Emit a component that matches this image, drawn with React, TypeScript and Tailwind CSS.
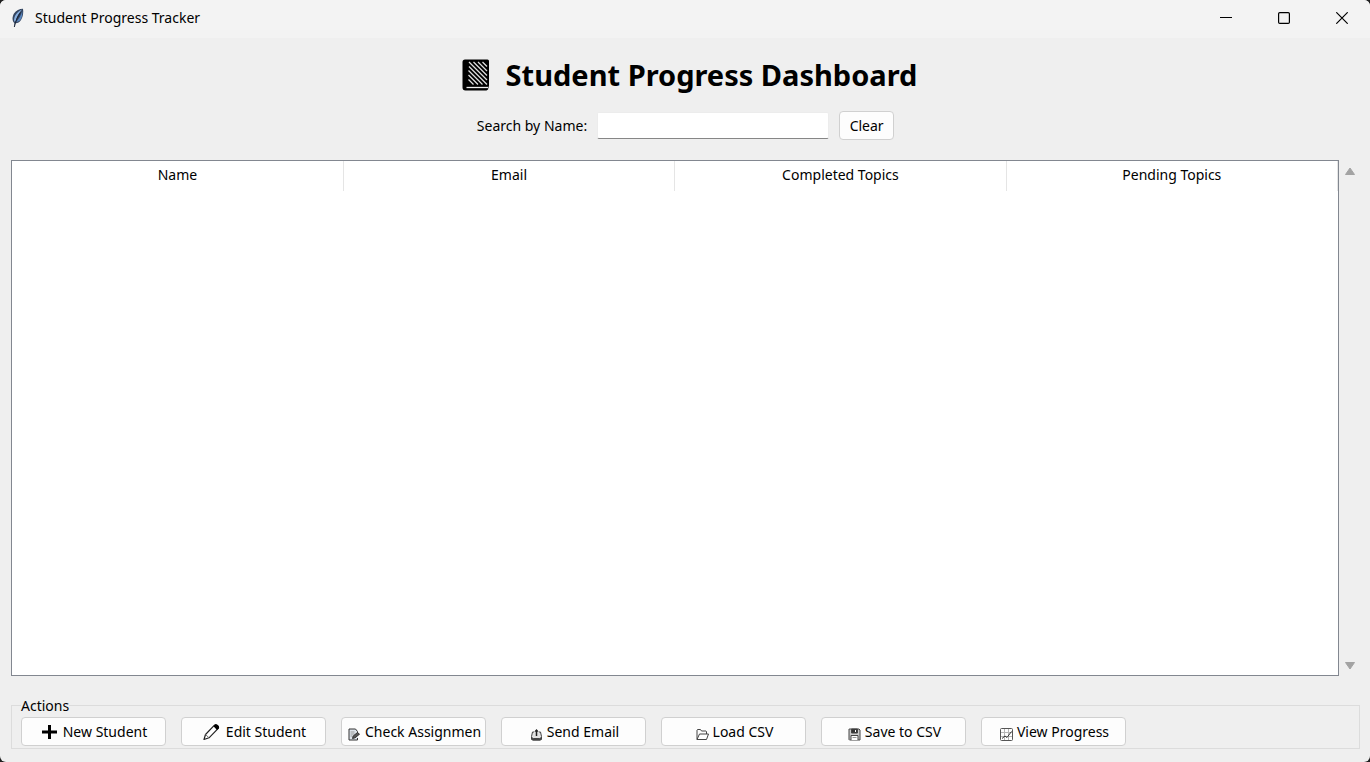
import { useState, type ReactNode } from "react";

function Feather() {
  return (
    <svg width="14" height="20" viewBox="0 0 14 20" aria-hidden="true">
      <path d="M3.500 19 3.400 15C1 13 1 9 3 5.500 5 2.500 8.500 .8 12 .8c.6 3.500 .2 8-2 11.200-1.500 2.200-3.700 3.500-5.700 3.300z" fill="#33445f" />
      <path d="M3.200 13.500C2.500 9 5.500 4 11 1.600 8 5 5.500 9 4.500 13.500z" fill="#86aede" />
      <path d="M5 14C8 11 10 7 11.300 3c.3 3-.3 6.500-1.800 8.800-1 1.400-2.900 2.400-4.500 2.200z" fill="#5a86bf" />
      <path d="M3.300 19C4.500 13 7 8 9.500 4.500" fill="none" stroke="#182234" />
    </svg>
  );
}

function Notebook() {
  return (
    <svg width="28" height="32" viewBox="0 0 28 32" aria-hidden="true">
      <path d="M3 .5h22.500a1.500 1.500 0 0 1 1.500 1.500v24.500l-1 4-1.500 1H3.500A3 3 0 0 1 .5 28.500V3A2.500 2.500 0 0 1 3 .5z" fill="#000" />
      <path d="M4.500 28.500H26" stroke="#efefef" strokeWidth="1.300" />
      <path d="M7 3 25 21M11.500 3 25 16.500M16 3l9 9M20.500 3 25 7.500M7 7.500 25 25.500M6.500 11.500 20.500 25.500M6.500 16l9.500 9.500M6.500 20.500l5 5" stroke="#dedede" strokeWidth="1.300" />
    </svg>
  );
}

function PlusIcon() {
  return (
    <svg width="15" height="16" viewBox="0 0 15 16" aria-hidden="true">
      <path d="M7.500 1v14M0 8h15" stroke="#000" strokeWidth="3" />
    </svg>
  );
}

function PencilIcon() {
  return (
    <svg width="17" height="18" viewBox="0 0 17 18" aria-hidden="true">
      <path d="M1 16.500 2.500 11.500 11.500 2.200C13 .8 16.500 4 15 5.700L6 14.800z" fill="#fff" stroke="#222" strokeWidth="1.200" strokeLinejoin="round" />
      <path d="M10.500 3.200 12 1.500c1.800-1.200 5.200 2 3.800 3.800L14 7z" fill="#000" />
      <path d="M2.500 11.500 6 14.800" stroke="#777" />
    </svg>
  );
}

function MemoIcon() {
  return (
    <svg width="13" height="13" viewBox="0 0 13 13" aria-hidden="true" fill="none" stroke="#333">
      <path d="M9.500 5.500V3.500L7.500 1H1v11h8.500V10" fill="#dce3ea" />
      <path d="M2.500 4h4M2.500 6h4M2.500 8h2" stroke="#999" />
      <path d="M4.500 10.500 5.200 8 9.500 4.500 11.500 6.200 7 9.800z" fill="#555" />
    </svg>
  );
}

function OutboxIcon() {
  return (
    <svg width="13" height="13" viewBox="0 0 13 13" aria-hidden="true" fill="none" stroke="#444">
      <path d="M4 4H2.500L1.500 8.500V11l1 1h8l1-1V8.500L10.500 4H9" fill="#e2e2e2" />
      <path d="M1.500 9.500 3.500 10.500h6l2-1V11l-1 1h-8l-1-1z" fill="#444" />
      <path d="M6.500 8V2" stroke="#222" strokeWidth="1.500" />
      <path d="M4.300 3.700 6.500 1l2.200 2.700z" fill="#222" stroke="none" />
    </svg>
  );
}

function FolderIcon() {
  return (
    <svg width="13" height="13" viewBox="0 0 13 13" aria-hidden="true" fill="none" stroke="#444" strokeLinejoin="round">
      <path d="M1 11.500V2l.5-.5H4.500l1 1.500H10l.5.5V6" />
      <path d="M1 11.500 3.500 6h9L10.500 11.500z" fill="#fff" />
    </svg>
  );
}

function FloppyIcon() {
  return (
    <svg width="13" height="13" viewBox="0 0 13 13" aria-hidden="true" fill="none" stroke="#444">
      <path d="M1.500 1h9.500l1 1v10H1.500L1 11.500V1z" fill="#ccc" />
      <path d="M3.500 1h6v4h-6z" fill="#333" />
      <path d="M7.500 2v2" stroke="#fff" />
      <path d="M3 12V7.500h7V12" fill="#fff" />
      <path d="M4.500 9.500h4" stroke="#999" />
    </svg>
  );
}

function ChartIcon() {
  return (
    <svg width="13" height="13" viewBox="0 0 13 13" aria-hidden="true" fill="none" stroke="#555">
      <rect x=".5" y=".5" width="12" height="12" rx="1" />
      <path d="M1 4.500h11M1 8.500h11M4.500 1v11M8.500 1v11" stroke="#b5b5b5" />
      <path d="M2 10.500 5 8 7 9.500l4.500-6" stroke="#333" />
    </svg>
  );
}

const columns = ["Name", "Email", "Completed Topics", "Pending Topics"];

const actions: { label: string; icon: ReactNode; large?: boolean }[] = [
  { label: "New Student", icon: <PlusIcon />, large: true },
  { label: "Edit Student", icon: <PencilIcon />, large: true },
  { label: "Check Assignments", icon: <MemoIcon /> },
  { label: "Send Email", icon: <OutboxIcon /> },
  { label: "Load CSV", icon: <FolderIcon /> },
  { label: "Save to CSV", icon: <FloppyIcon /> },
  { label: "View Progress", icon: <ChartIcon /> },
];

const buttonStyle = "h-[29px] rounded border border-[#d0d0d0] bg-[#fdfdfd] hover:bg-[#eef5fb]";

export default function App() {
  const [query, setQuery] = useState("");

  return (
    <div className="bg-[#202020]">
      <div className="flex min-h-screen flex-col overflow-hidden rounded-md bg-[#efefef] font-['Noto_Sans',sans-serif] text-sm text-black">
        <header className="flex h-[38px] items-center justify-between bg-[#f3f3f3] pl-[11px] pb-[2px]">
          <div className="flex items-center gap-[10px]">
            <Feather />
            <span>Student Progress Tracker</span>
          </div>
          <div className="flex gap-[2px]">
            <button aria-label="Minimize" className="flex h-9 w-14 items-center justify-center">
              <svg width="12" height="12" viewBox="0 0 12 12"><path d="M0 5.500h12" stroke="#000" /></svg>
            </button>
            <button aria-label="Maximize" className="flex h-9 w-14 items-center justify-center">
              <svg width="12" height="12" viewBox="0 0 12 12"><rect x=".6" y=".6" width="10.800" height="10.800" rx="1.200" fill="none" stroke="#000" strokeWidth="1.200" /></svg>
            </button>
            <button aria-label="Close" className="flex h-9 w-14 items-center justify-center">
              <svg width="12" height="12" viewBox="0 0 12 12"><path d="M.3 .3l11.400 11.400M11.700 .3.3 11.700" stroke="#000" strokeWidth="1.200" /></svg>
            </button>
          </div>
        </header>

        <main className="flex flex-1 flex-col pr-[10px] pb-[13px] pl-[11px]">
          <h1 className="mt-[17px] flex h-10 items-center justify-center gap-4 pl-2 text-[29px] font-bold">
            <Notebook />
            Student Progress Dashboard
          </h1>

          <div className="mt-4 flex h-[29px] items-center justify-center gap-[10px]">
            <label htmlFor="search">Search by Name:</label>
            <input
              id="search"
              value={query}
              onChange={(e) => setQuery(e.target.value)}
              className="h-[27px] w-[232px] rounded-xs border border-[#ececec] border-b-[#868686] bg-white px-1 outline-none"
            />
            <button onClick={() => setQuery("")} className={`${buttonStyle} w-[55px]`}>Clear</button>
          </div>

          <div className="mt-5 flex flex-1">
            <div className="flex-1 border border-[#828790] bg-white">
              <table className="w-full table-fixed">
                <thead>
                  <tr>
                    {columns.map((c) => (
                      <th key={c} className="h-[30px] border-r border-[#e5e5e5] p-0 pb-[2px] font-normal">{c}</th>
                    ))}
                  </tr>
                </thead>
                <tbody />
              </table>
            </div>
            <div className="flex w-[21px] flex-col items-center justify-between pt-[6px] pb-[5px]">
              <button aria-label="Scroll up">
                <svg className="block" width="12" height="10" viewBox="0 0 12 10"><path d="M1.500 8.500 6 2l4.500 6.500z" fill="#a3a3a3" stroke="#a3a3a3" strokeLinejoin="round" /></svg>
              </button>
              <button aria-label="Scroll down">
                <svg className="block" width="12" height="10" viewBox="0 0 12 10"><path d="M1.500 1.500 6 8l4.500-6.500z" fill="#a3a3a3" stroke="#a3a3a3" strokeLinejoin="round" /></svg>
              </button>
            </div>
          </div>

          <fieldset className="mt-5 border border-[#dcdcdc] px-[9px] pt-[2px] pb-[2px]">
            <legend className="h-[19px] leading-[19px]">Actions</legend>
            <div className="flex gap-[15px]">
              {actions.map((a) => (
                <button key={a.label} className={`${buttonStyle} flex w-[145px] px-1`}>
                  <span className="flex h-full w-full items-center overflow-hidden pl-[2px]">
                    <span className={a.large ? "mx-auto flex items-center gap-[6px]" : "mx-auto flex items-center gap-1"}>
                      <span className={a.large ? "shrink-0" : "shrink-0 pt-[5px]"}>{a.icon}</span>
                      <span className="whitespace-nowrap">{a.label}</span>
                    </span>
                  </span>
                </button>
              ))}
            </div>
          </fieldset>
        </main>
      </div>
    </div>
  );
}
